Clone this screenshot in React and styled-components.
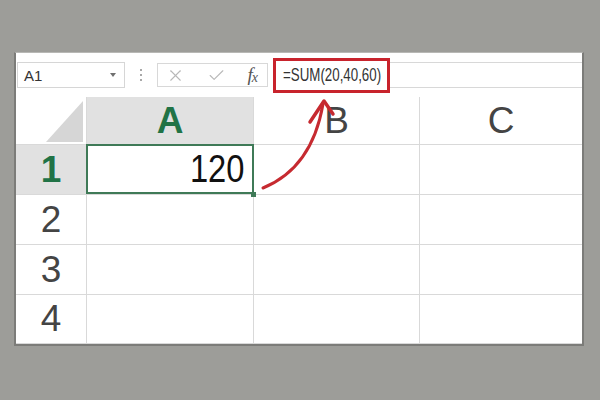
import React from "react";
import styled, { createGlobalStyle } from "styled-components";
import { X, Check } from "lucide-react";

const GlobalStyle = createGlobalStyle`
  body {
    margin: 0;
    background: #9d9d99;
    font-family: "Liberation Sans", Arial, sans-serif;
  }
`;

const Page = styled.div`
  position: relative;
  width: 600px;
  height: 400px;
  padding: 52px 0 0 14px;
  box-sizing: border-box;
`;

const Sheet = styled.div`
  width: 570px;
  height: 294px;
  box-sizing: border-box;
  background: #fff;
  border: 2px solid #7c7c79;
  border-top: 1px solid #b8b8b5;
  display: flex;
  flex-direction: column;
`;

// formula bar
const Toolbar = styled.div`
  height: 44px;
  display: flex;
  align-items: center;
  padding-left: 1px;
`;

const NameBox = styled.div`
  width: 108px;
  height: 26px;
  box-sizing: border-box;
  border: 1px solid #d6d6d6;
  display: flex;
  align-items: center;
  justify-content: space-between;
  padding: 0 8px 0 6px;
  font-size: 15px;
  color: #333;
`;

const Caret = styled.span`
  width: 0;
  height: 0;
  border-left: 3px solid transparent;
  border-right: 3px solid transparent;
  border-top: 4px solid #707070;
`;

const Dots = styled.div`
  width: 32px;
  display: flex;
  flex-direction: column;
  align-items: center;
  gap: 3px;

  span {
    width: 2px;
    height: 2px;
    background: #a8a8a8;
  }
`;

const FuncBox = styled.div`
  width: 111px;
  height: 24px;
  box-sizing: border-box;
  border: 1px solid #d8d8d8;
  display: flex;
  align-items: center;
  justify-content: space-between;
  padding: 0 9px 0 8px;
  color: #b8b8b8;
`;

const Fx = styled.span`
  font-family: "Liberation Serif", "Times New Roman", serif;
  font-style: italic;
  font-size: 19px;
  color: #555;

  sub {
    font-size: 14px;
    vertical-align: -1px;
    margin-left: -1px;
  }
`;

const FormulaInput = styled.div`
  flex: 1;
  height: 26px;
  box-sizing: border-box;
  margin-left: 5px;
  border-top: 1px solid #d8d8d8;
  border-bottom: 1px solid #d8d8d8;
  display: flex;
  align-items: center;
`;

const RedFrame = styled.div`
  flex-shrink: 0;
  width: 117px;
  height: 35px;
  box-sizing: border-box;
  border: 3px solid #c8232c;
  display: flex;
  align-items: center;
  padding-left: 7px;
  background: #fff;
`;

const FormulaText = styled.span`
  font-size: 18px;
  color: #333;
  white-space: nowrap;
  transform: scaleX(0.74);
  transform-origin: left center;
`;

// grid
const Grid = styled.div`
  flex: 1;
  display: grid;
  grid-template-columns: 71px 167px 166px 1fr;
  grid-template-rows: 48px repeat(3, 50px) 1fr;
`;

const Cell = styled.div`
  position: relative;
  box-sizing: border-box;
  border-right: 1px solid #d9d9d9;
  border-bottom: 1px solid #d9d9d9;
  display: flex;
  align-items: center;
  justify-content: ${({ $align }) => $align || "center"};
  background: ${({ $active }) => ($active ? "#e1e1e1" : "#fff")};
  color: ${({ $active }) => ($active ? "#217346" : "#444")};
  font-weight: ${({ $active }) => ($active ? "bold" : "normal")};
  font-size: 37px;

  &:nth-child(4n) {
    border-right: none;
  }
`;

const Corner = styled(Cell)`
  align-items: flex-end;
  justify-content: flex-end;
  padding: 0 3px 2px 0;
`;

const Triangle = styled.div`
  width: 37px;
  height: 41px;
  background: #d6d6d6;
  clip-path: polygon(100% 0, 100% 100%, 0 100%);
`;

const Selected = styled(Cell)`
  padding-right: 9px;

  &::after {
    content: "";
    position: absolute;
    inset: -1px -1px 0 -1px;
    border: 2px solid #3f7a57;
  }

  &::before {
    content: "";
    position: absolute;
    right: -3px;
    bottom: -3px;
    width: 5px;
    height: 5px;
    background: #3f7a57;
    z-index: 1;
  }
`;

const Value = styled.span`
  font-size: 38px;
  color: #111;
  transform: scaleX(0.86);
  transform-origin: right center;
`;

const Arrow = styled.svg`
  position: absolute;
  left: 0;
  top: 0;
  pointer-events: none;
`;

const columns = ["A", "B", "C"];
const rows = [1, 2, 3, 4];

export default function App() {
  return (
    <Page>
      <GlobalStyle />
      <Sheet>
        <Toolbar>
          <NameBox>
            A1
            <Caret />
          </NameBox>
          <Dots>
            <span />
            <span />
            <span />
          </Dots>
          <FuncBox>
            <X size={19} strokeWidth={1.4} />
            <Check size={19} strokeWidth={1.4} />
            <Fx>
              f<sub>x</sub>
            </Fx>
          </FuncBox>
          <FormulaInput>
            <RedFrame>
              <FormulaText>=SUM(20,40,60)</FormulaText>
            </RedFrame>
          </FormulaInput>
        </Toolbar>
        <Grid>
          <Corner>
            <Triangle />
          </Corner>
          {columns.map((c) => (
            <Cell key={c} $active={c === "A"}>
              {c}
            </Cell>
          ))}
          {rows.map((r) => (
            <React.Fragment key={r}>
              <Cell $active={r === 1}>{r}</Cell>
              {r === 1 ? (
                <Selected $align="flex-end">
                  <Value>120</Value>
                </Selected>
              ) : (
                <Cell />
              )}
              <Cell />
              <Cell />
            </React.Fragment>
          ))}
        </Grid>
      </Sheet>
      <Arrow width="600" height="400" viewBox="0 0 600 400">
        <path
          d="M263 188 Q312 168 323 104"
          fill="none"
          stroke="#c62a30"
          strokeWidth="3"
          strokeLinecap="round"
        />
        <path
          d="M310 122 L324 101 L333 114"
          fill="none"
          stroke="#c62a30"
          strokeWidth="3.5"
          strokeLinecap="round"
          strokeLinejoin="round"
        />
      </Arrow>
    </Page>
  );
}
